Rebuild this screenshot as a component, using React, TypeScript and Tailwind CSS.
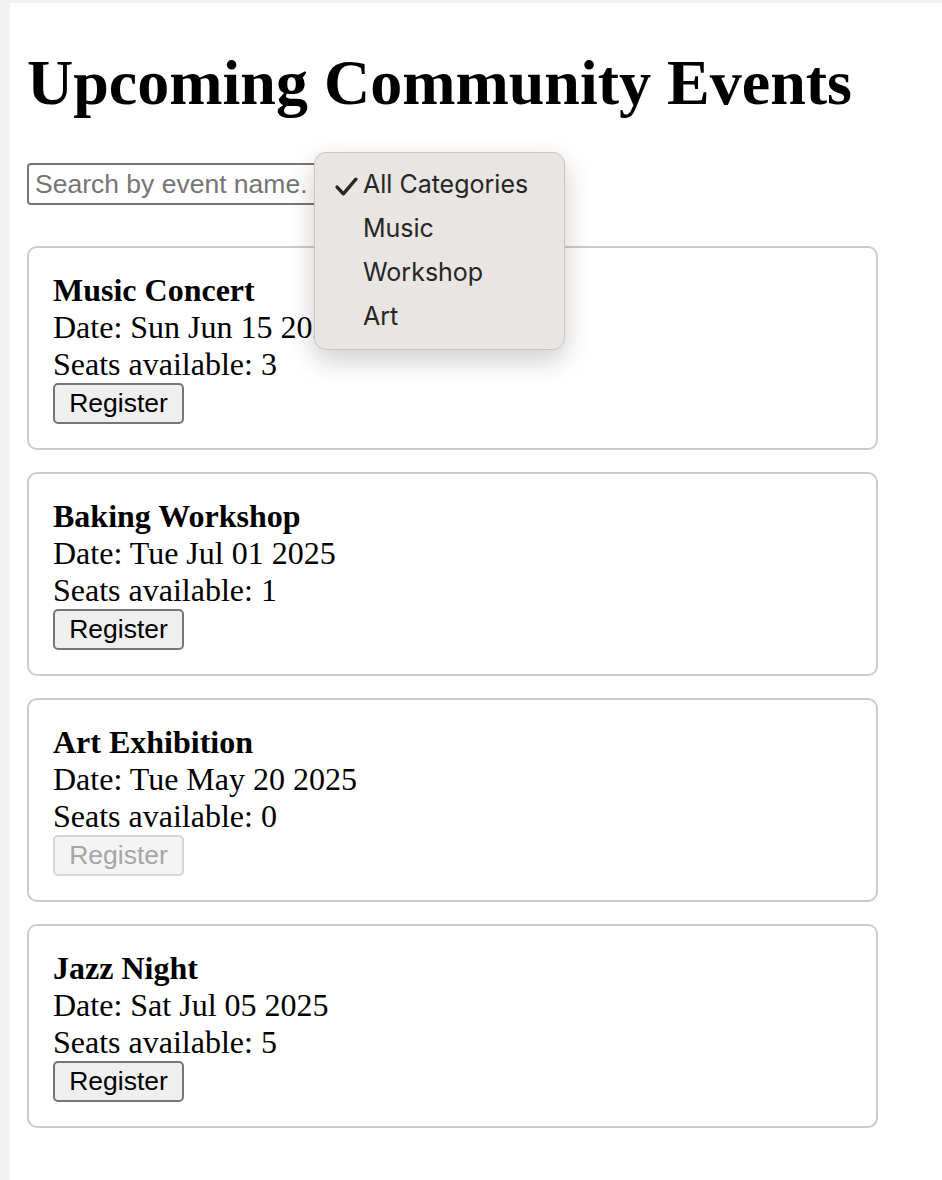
import { useState } from "react";

type EventItem = { id: number; name: string; date: string; seats: number; category: string };

const events: EventItem[] = [
    { id: 1, name: "Music Concert", date: "Sun Jun 15 2025", seats: 3, category: "Music" },
    { id: 2, name: "Baking Workshop", date: "Tue Jul 01 2025", seats: 1, category: "Workshop" },
    { id: 3, name: "Art Exhibition", date: "Tue May 20 2025", seats: 0, category: "Art" },
    { id: 4, name: "Jazz Night", date: "Sat Jul 05 2025", seats: 5, category: "Music" },
];

const categories = ["All Categories", "Music", "Workshop", "Art"];

const serif = "font-['Liberation_Serif',serif]";

export default function App() {
    const [query, setQuery] = useState("");
    const [category] = useState("All Categories");

    return (
        <div className="min-h-[1180px] bg-[#f3f3f3] pl-[10px] pt-[3px]">
            <div className={`min-h-[1177px] bg-white pl-[17px] pt-[43px] text-black ${serif}`}>
                <div className="w-[851px]">
                    <h1 className="text-[64px] font-bold leading-[74px]">Upcoming Community Events</h1>

                    <div className="relative mt-[43px] mb-[41px] flex h-[42px] items-center">
                        <input
                            value={query}
                            onChange={(e) => setQuery(e.target.value)}
                            placeholder="Search by event name..."
                            className="h-[42px] w-[290px] rounded-[4px] border-2 border-[#767676] bg-white px-[6px] font-['Liberation_Sans',sans-serif] text-[26.5px] text-black placeholder:text-[#757575] outline-none"
                        />
                        <div className="ml-[4px] h-[38px] w-[240px] rounded-[4px] border-2 border-[#767676] bg-[#efefef]" />

                        {/* open native-style select menu */}
                        <div className="absolute left-[287px] top-[-11px] z-10 w-[251px] rounded-[12px] border border-[#c9c5c3] bg-[#e9e5e3] py-[10px] font-['Inter',sans-serif] text-[25px] text-[#262626] shadow-[0_10px_28px_rgba(0,0,0,0.2)]">
                            {categories.map((c) => (
                                <div key={c} className="relative flex h-[44px] items-center pl-[48px]">
                                    {c === category && (
                                        <svg
                                            viewBox="0 0 22 18"
                                            className="absolute left-[20px] top-[14px] h-[19px] w-[23px]"
                                            fill="none"
                                            stroke="#262626"
                                            strokeWidth="3.2"
                                            strokeLinecap="round"
                                            strokeLinejoin="round"
                                        >
                                            <polyline points="2,9.5 8,16 20,2" />
                                        </svg>
                                    )}
                                    <span>{c}</span>
                                </div>
                            ))}
                        </div>
                    </div>

                    <div className="flex flex-col gap-[22px]">
                        {events.map((ev) => {
                            const full = ev.seats === 0;
                            return (
                                <div key={ev.id} className="rounded-[10px] border-2 border-[#cccccc] p-[24px]">
                                    <div className="text-[32px] font-bold leading-[37px]">{ev.name}</div>
                                    <div className="text-[32px] leading-[37px]">Date: {ev.date}</div>
                                    <div className="text-[32px] leading-[37px]">Seats available: {ev.seats}</div>
                                    <button
                                        disabled={full}
                                        className={`h-[41px] w-[131px] rounded-[5px] border-2 font-['Liberation_Sans',sans-serif] text-[26.5px] leading-none ${
                                            full
                                                ? "border-[#d6d6d6] bg-[#f4f4f4] text-[#a6a6a6]"
                                                : "border-[#767676] bg-[#efefef] text-black"
                                        }`}
                                    >
                                        Register
                                    </button>
                                </div>
                            );
                        })}
                    </div>
                </div>
            </div>
        </div>
    );
}
